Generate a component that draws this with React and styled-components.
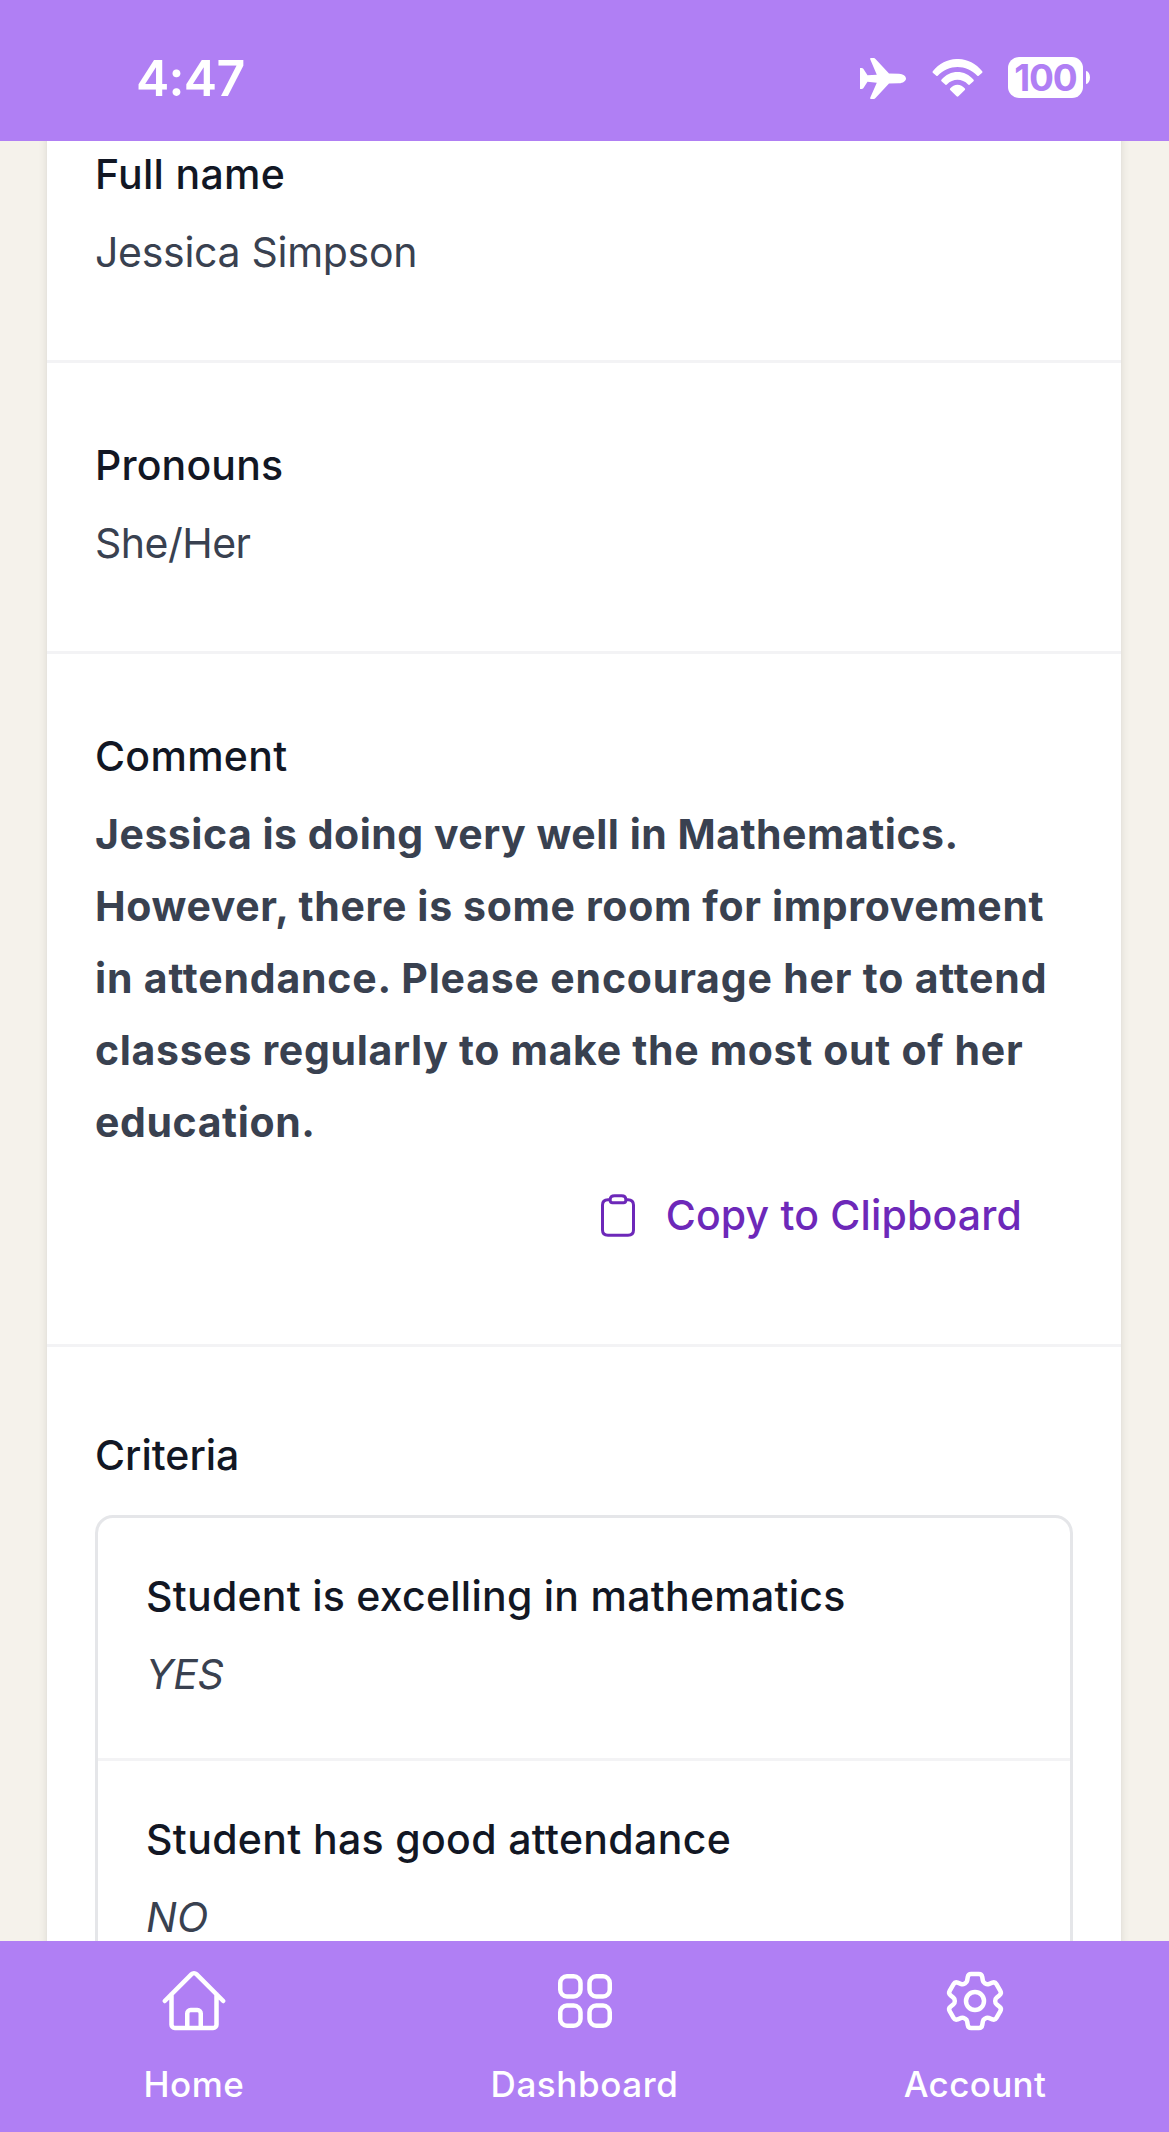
import React from "react";
import styled, { createGlobalStyle } from "styled-components";

const GlobalStyle = createGlobalStyle`
  * { box-sizing: border-box; }
  html, body { margin: 0; padding: 0; }
  body { background: #f5f2eb; font-family: Inter, "Liberation Sans", sans-serif; }
`;

const Screen = styled.div`
  width: 1169px;
  height: 2132px;
  display: flex;
  flex-direction: column;
  overflow: hidden;
  background: #f5f2eb;
`;

const StatusBar = styled.header`
  flex: 0 0 141px;
  display: flex;
  justify-content: space-between;
  align-items: flex-start;
  padding: 57px 79px 0 136px;
  background: #b07ff4;
  color: #fff;
  z-index: 1;
`;

const Clock = styled.div`
  font-size: 50px;
  font-weight: 600;
  line-height: 42px;
  letter-spacing: -0.7px;
`;

const StatusIcons = styled.div`
  display: flex;
  align-items: flex-start;
`;

const Glyph = styled.svg`
  display: block;
  width: ${(p) => p.$w}px;
  height: ${(p) => p.$h}px;
  margin-top: ${(p) => p.$top || 0}px;
  margin-right: ${(p) => p.$gap || 0}px;
`;

const Battery = styled.div`
  width: 75px;
  height: 41px;
  border-radius: 11px;
  background: #fff;
  color: #b07ff4;
  font-size: 37px;
  font-weight: 700;
  line-height: 41px;
  letter-spacing: -1.2px;
  text-align: center;
`;

const BatteryTip = styled.div`
  width: 4px;
  height: 13px;
  margin: 14px 0 0 3px;
  border-radius: 0 4px 4px 0 / 0 6.5px 6.5px 0;
  background: #fff;
`;

const Content = styled.main`
  flex: 1;
  min-height: 0;
  overflow: hidden;
  padding: 0 48px 0 47px;
`;

const Card = styled.article`
  margin-top: -69px;
  height: 2100px;
  background: #fff;
  box-shadow: 0 3px 9px rgba(0, 0, 0, 0.1), 0 3px 6px -3px rgba(0, 0, 0, 0.1);
`;

const Section = styled.section`
  padding: ${(p) => p.$top || 66}px 48px 72px;
  border-bottom: 3px solid #f3f3f5;
`;

const Label = styled.div`
  color: #121724;
  font-size: 41px;
  font-weight: 500;
  line-height: 72px;
  letter-spacing: ${(p) => p.$track || 0}px;
  white-space: nowrap;
`;

const Value = styled.div`
  margin-top: 6px;
  color: #394150;
  font-size: 41px;
  font-weight: 400;
  font-style: ${(p) => (p.$italic ? "italic" : "normal")};
  line-height: 72px;
  letter-spacing: ${(p) => p.$track || 0}px;
  white-space: nowrap;
`;

const Comment = styled.div`
  margin-top: 6px;
  color: #394150;
  font-size: 41px;
  font-weight: 700;
  line-height: 72px;
  white-space: nowrap;
`;

const Line = styled.div`
  letter-spacing: ${(p) => p.$track || 0}px;
`;

const CopyButton = styled.button`
  display: flex;
  align-items: center;
  margin-left: auto;
  padding: 21px 51px 21px 0;
  border: 0;
  background: none;
  color: #6d28b9;
  font-family: inherit;
  font-size: 41px;
  font-weight: 500;
  line-height: 72px;
  letter-spacing: 0.17px;
  white-space: nowrap;
`;

const CriteriaList = styled.div`
  margin-top: 24px;
  border: 3px solid #e5e6e9;
  border-radius: 18px;
`;

const Criterion = styled.div`
  padding: 42px 48px 48px;
  border-bottom: 3px solid #f3f3f5;
`;

const TabBar = styled.nav`
  flex: 0 0 191px;
  display: grid;
  grid-template-columns: 388px 393px 388px;
  background: #b07ff4;
  color: #fff;
  z-index: 1;
`;

const Tab = styled.a`
  display: flex;
  flex-direction: column;
  align-items: center;
  padding-top: 24px;
  font-size: 35px;
  font-weight: 500;
  line-height: 48px;
  letter-spacing: ${(p) => p.$track || 0}px;
`;

const TabIcon = styled.svg`
  display: block;
  width: 72px;
  height: 72px;
  margin-bottom: 23px;
`;

function Airplane() {
  return (
    <Glyph $w={46} $h={41} $top={1} $gap={26} viewBox="0 0 46 41" fill="#fff">
      <path d="M0 10h1.600Q2.700 10 3.300 10.800L7.500 17.200L16.800 16.700L10.200 1.200Q9.800 0 11 0H13.700Q14.800 0 15.500 .9L29 15.600L39 15.700C43 15.800 46 18 46 20.500S43 25.200 39 25.300L29 25.400L15.500 40.100Q14.800 41 13.700 41H11Q9.800 41 10.200 39.800L16.800 24.800L7.500 23.800L3.300 30.200Q2.700 31 1.600 31H0Z" />
    </Glyph>
  );
}

function Wifi() {
  return (
    <Glyph $w={51} $h={38} $top={2} $gap={25} viewBox="0 0 51 38" fill="#fff">
      <path d="M.8 12.200C14-4.100 37-4.100 50.200 12.200Q50.800 13 50.200 13.700L46.700 16.800Q46 17.400 45.300 16.700C34.500 5 16.500 5 5.700 16.700Q5 17.400 4.300 16.800L.8 13.700Q.2 13 .8 12.200Z" />
      <path d="M9.400 20.700C18 10.300 33 10.300 41.600 20.700Q42.200 21.500 41.500 22.200L37.500 25.700Q36.800 26.200 36.100 25.500C30 19.300 21 19.300 14.900 25.500Q14.200 26.200 13.500 25.700L9.500 22.200Q8.800 21.500 9.400 20.700Z" />
      <path d="M18.100 29.600C22 24.400 29 24.400 32.900 29.600Q33.400 30.300 32.800 30.900L26.400 37.300Q25.500 38.100 24.600 37.300L18.200 30.900Q17.600 30.300 18.100 29.600Z" />
    </Glyph>
  );
}

function Clipboard() {
  return (
    <Glyph $w={34} $h={43} $gap={31} viewBox="0 0 34 43" fill="none" stroke="#6d28b9" strokeWidth="3" strokeLinejoin="round">
      <path d="M8.500 5.700H7Q1.500 5.700 1.500 11V36Q1.500 41.300 7 41.300H27Q32.500 41.300 32.500 36V11Q32.500 5.700 27 5.700H25.500" />
      <path d="M13.500 1.700H20.500Q24.800 1.700 24.800 5.500V6.500Q24.800 8.700 22.500 8.700H11.500Q9.200 8.700 9.200 6.500V5.500Q9.200 1.700 13.500 1.700Z" />
    </Glyph>
  );
}

const stroke = {
  viewBox: "0 0 24 24",
  fill: "none",
  stroke: "currentColor",
  strokeWidth: 1.5,
  strokeLinecap: "round",
  strokeLinejoin: "round",
};

function HomeIcon() {
  return (
    <TabIcon {...stroke}>
      <path d="M2.250 12l8.954-8.955c.44-.439 1.152-.439 1.591 0L21.750 12M4.500 9.750v10.125c0 .621.504 1.125 1.125 1.125H9.750v-4.875c0-.621.504-1.125 1.125-1.125h2.250c.621 0 1.125.504 1.125 1.125V21h4.125c.621 0 1.125-.504 1.125-1.125V9.750M8.250 21h8.250" />
    </TabIcon>
  );
}

function GridIcon() {
  return (
    <TabIcon {...stroke}>
      <rect x="3.750" y="3.750" width="6.750" height="6.750" rx="2.250" />
      <rect x="13.500" y="3.750" width="6.750" height="6.750" rx="2.250" />
      <rect x="3.750" y="13.500" width="6.750" height="6.750" rx="2.250" />
      <rect x="13.500" y="13.500" width="6.750" height="6.750" rx="2.250" />
    </TabIcon>
  );
}

function GearIcon() {
  return (
    <TabIcon {...stroke}>
      <path d="M9.594 3.940c.09-.542.56-.94 1.110-.94h2.593c.55 0 1.020.398 1.110.94l.213 1.281c.063.374.313.686.645.87.074.04.147.083.22.127.325.196.72.257 1.075.124l1.217-.456a1.125 1.125 0 0 1 1.370.49l1.296 2.247a1.125 1.125 0 0 1-.26 1.431l-1.003.827c-.293.241-.438.613-.43.992a7.723 7.723 0 0 1 0 .255c-.008.378.137.75.43.991l1.004.827c.424.35.534.955.26 1.430l-1.298 2.247a1.125 1.125 0 0 1-1.369.491l-1.217-.456c-.355-.133-.75-.072-1.076.124a6.470 6.470 0 0 1-.22.128c-.331.183-.581.495-.644.869l-.213 1.281c-.09.543-.56.940-1.110.940h-2.594c-.55 0-1.019-.398-1.110-.94l-.213-1.281c-.062-.374-.312-.686-.644-.87a6.520 6.520 0 0 1-.22-.127c-.325-.196-.72-.257-1.076-.124l-1.217.456a1.125 1.125 0 0 1-1.369-.49l-1.297-2.247a1.125 1.125 0 0 1 .26-1.431l1.004-.827c.292-.240.437-.613.430-.991a6.932 6.932 0 0 1 0-.255c.007-.380-.138-.751-.430-.992l-1.004-.827a1.125 1.125 0 0 1-.26-1.430l1.297-2.247a1.125 1.125 0 0 1 1.370-.491l1.216.456c.356.133.751.072 1.076-.124.072-.044.146-.086.220-.128.332-.183.582-.495.644-.869l.214-1.280Z" />
      <path d="M15 12a3 3 0 1 1-6 0 3 3 0 0 1 6 0Z" />
    </TabIcon>
  );
}

export default function App() {
  return (
    <Screen>
      <GlobalStyle />
      <StatusBar>
        <Clock>4:47</Clock>
        <StatusIcons>
          <Airplane />
          <Wifi />
          <Battery>100</Battery>
          <BatteryTip />
        </StatusIcons>
      </StatusBar>
      <Content>
        <Card>
          <Section>
            <Label $track={0.28}>Full name</Label>
            <Value $track={-0.3}>Jessica Simpson</Value>
          </Section>
          <Section>
            <Label $track={0.15}>Pronouns</Label>
            <Value $track={-0.5}>She/Her</Value>
          </Section>
          <Section>
            <Label $track={0.3}>Comment</Label>
            <Comment>
              <Line $track={0.5}>Jessica is doing very well in Mathematics.</Line>
              <Line $track={0.65}>However, there is some room for improvement</Line>
              <Line $track={0.81}>in attendance. Please encourage her to attend</Line>
              <Line $track={0.68}>classes regularly to make the most out of her</Line>
              <Line $track={0.6}>education.</Line>
            </Comment>
            <CopyButton>
              <Clipboard />
              Copy to Clipboard
            </CopyButton>
          </Section>
          <Section $top={72}>
            <Label>Criteria</Label>
            <CriteriaList>
              <Criterion>
                <Label $track={0.26}>Student is excelling in mathematics</Label>
                <Value $italic $track={-0.5}>YES</Value>
              </Criterion>
              <Criterion>
                <Label $track={0.35}>Student has good attendance</Label>
                <Value $italic>NO</Value>
              </Criterion>
            </CriteriaList>
          </Section>
        </Card>
      </Content>
      <TabBar>
        <Tab $track={0.5}><HomeIcon />Home</Tab>
        <Tab $track={0.6}><GridIcon />Dashboard</Tab>
        <Tab $track={0.35}><GearIcon />Account</Tab>
      </TabBar>
    </Screen>
  );
}
